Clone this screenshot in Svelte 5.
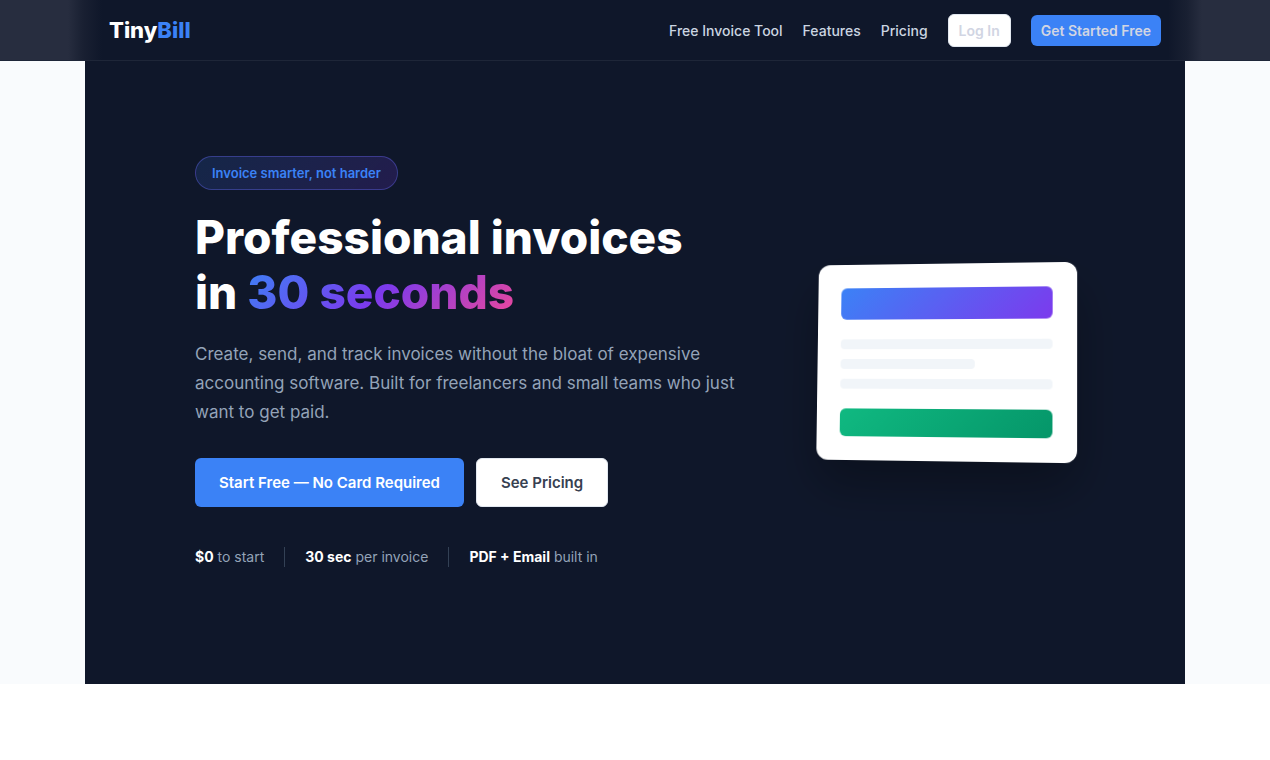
<script>
  const links = [
    { label: 'Free Invoice Tool', href: '#tool' },
    { label: 'Features', href: '#features' },
    { label: 'Pricing', href: '#pricing' }
  ];

  const stats = [
    { value: '$0', label: 'to start' },
    { value: '30 sec', label: 'per invoice' },
    { value: 'PDF + Email', label: 'built in' }
  ];
</script>

<header class="nav">
  <div class="nav-inner">
    <a class="logo" href="#home">Tiny<span>Bill</span></a>
    <nav class="nav-links" aria-label="Main">
      {#each links as link}
        <a href={link.href}>{link.label}</a>
      {/each}
      <a class="btn small secondary" href="#login">Log In</a>
      <a class="btn small primary" href="#signup">Get Started Free</a>
    </nav>
  </div>
</header>

<main class="page">
  <section class="hero">
    <div class="copy">
      <span class="badge">Invoice smarter, not harder</span>
      <h1>Professional invoices<br />in <span class="accent">30 seconds</span></h1>
      <p class="lead">
        Create, send, and track invoices without the bloat of expensive accounting software. Built for
        freelancers and small teams who just want to get paid.
      </p>
      <div class="actions">
        <a class="btn large primary" href="#signup">Start Free — No Card Required</a>
        <a class="btn large secondary" href="#pricing">See Pricing</a>
      </div>
      <ul class="stats">
        {#each stats as stat}
          <li><strong>{stat.value}</strong> {stat.label}</li>
        {/each}
      </ul>
    </div>
    <div class="visual" aria-hidden="true">
      <div class="invoice">
        <div class="invoice-head"></div>
        <div class="lines">
          <div class="line"></div>
          <div class="line short"></div>
          <div class="line"></div>
        </div>
        <div class="invoice-total"></div>
      </div>
    </div>
  </section>
</main>

<style>
  :global(body) {
    margin: 0;
    background: #ffffff;
    font-family: Inter, 'Liberation Sans', sans-serif;
    -webkit-font-smoothing: antialiased;
  }

  a {
    text-decoration: none;
  }

  .nav {
    position: sticky;
    top: 0;
    z-index: 10;
    background: linear-gradient(
      90deg,
      #272d3f calc(50% - 567px),
      #192032 calc(50% - 552px),
      #0f172a calc(50% - 533px),
      #0f172a calc(50% + 533px),
      #192032 calc(50% + 552px),
      #272d3f calc(50% + 567px)
    );
    border-bottom: 1px solid #1e2638;
  }

  .nav-inner {
    box-sizing: border-box;
    max-width: 1100px;
    height: 60px;
    margin: 0 auto;
    padding: 0 24px;
    display: flex;
    align-items: center;
    justify-content: space-between;
  }

  .logo {
    color: #ffffff;
    font-size: 22px;
    font-weight: 800;
    line-height: 32px;
  }

  .logo span {
    color: #3b82f6;
  }

  .nav-links {
    display: flex;
    align-items: center;
    gap: 20px;
  }

  .nav-links a {
    color: #cbd5e1;
    font-size: 14px;
    font-weight: 500;
    line-height: 21px;
  }

  .nav-links .btn {
    color: #d1d5e3;
    font-weight: 600;
  }

  .btn {
    border-radius: 6px;
    font-weight: 600;
    white-space: nowrap;
  }

  .primary {
    background: #3b82f6;
    color: #ffffff;
  }

  .secondary {
    background: #ffffff;
    border: 1px solid #e2e8f0;
    color: #374151;
  }

  .small {
    padding: 5px 10px;
  }

  .large {
    box-sizing: border-box;
    height: 49px;
    padding: 0 24px;
    display: flex;
    align-items: center;
    font-size: 15px;
    line-height: 24px;
  }

  .page {
    background: #f9fbfd;
  }

  .hero {
    box-sizing: border-box;
    max-width: 1100px;
    margin: 0 auto;
    padding: 95px 109px 117px 110px;
    display: grid;
    grid-template-columns: minmax(0, 1fr) 262px;
    align-items: center;
    gap: 60px;
    background: #0f172a;
  }

  .badge {
    display: inline-block;
    padding: 6px 16px;
    border: 1px solid rgba(99, 102, 241, 0.4);
    border-radius: 20px;
    background: linear-gradient(135deg, rgba(59, 130, 246, 0.15), rgba(124, 58, 237, 0.18));
    color: #3b82f6;
    font-size: 13px;
    font-weight: 600;
    line-height: 20px;
  }

  h1 {
    margin: 20px 0;
    color: #ffffff;
    font-size: 46px;
    font-weight: 800;
    line-height: 55px;
    white-space: nowrap;
  }

  .accent {
    background: linear-gradient(135deg, #3b82f6, #7c3aed 50%, #ec4899);
    background-clip: text;
    color: transparent;
  }

  .lead {
    margin: 0 0 31px;
    color: #94a3b8;
    font-size: 17px;
    line-height: 29px;
  }

  .actions {
    display: flex;
    gap: 12px;
  }

  .stats {
    margin: 40px 0 0;
    padding: 0;
    display: flex;
    list-style: none;
    color: #94a3b8;
    font-size: 14px;
    line-height: 20px;
  }

  .stats li + li {
    margin-left: 20px;
    padding-left: 20px;
    border-left: 1px solid #334155;
  }

  .stats strong {
    color: #ffffff;
    font-weight: 700;
  }

  .visual {
    perspective: 1000px;
  }

  .invoice {
    padding: 24px;
    border-radius: 12px;
    background: #ffffff;
    box-shadow: 0 25px 50px rgba(0, 0, 0, 0.3);
    transform: rotateY(-8deg) rotateX(3deg);
  }

  .invoice-head {
    height: 32px;
    border-radius: 6px;
    background: linear-gradient(135deg, #3b82f6, #7c3aed);
  }

  .lines {
    margin: 20px 0;
    display: grid;
    gap: 10px;
  }

  .line {
    height: 10px;
    border-radius: 4px;
    background: #f1f5f9;
  }

  .short {
    width: 64%;
  }

  .invoice-total {
    height: 28px;
    border-radius: 6px;
    background: linear-gradient(135deg, #10b981, #059669);
  }
</style>
